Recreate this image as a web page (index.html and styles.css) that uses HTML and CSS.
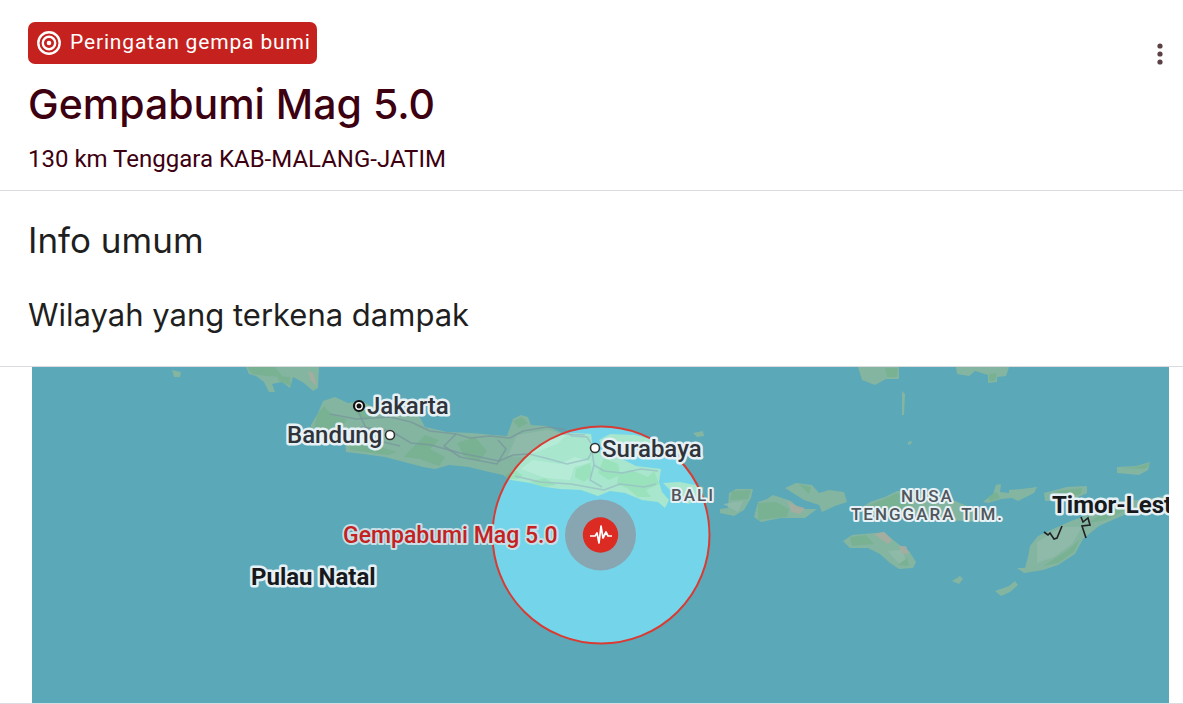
FILE: index.html
```html
<!DOCTYPE html>
<html lang="id">
<head>
<meta charset="utf-8">
<meta name="viewport" content="width=device-width, initial-scale=1">
<title>Peringatan gempa bumi</title>
<link rel="stylesheet" href="styles.css">
</head>
<body>
<main class="alert-card">
  <header class="alert-header">
    <div class="alert-summary">
      <div class="badge">
        <svg class="badge-icon" viewBox="0 0 24 24" aria-hidden="true">
          <circle cx="12" cy="12" r="10.7"/><circle cx="12" cy="12" r="6.2"/><circle class="badge-dot" cx="12" cy="12" r="2.3"/>
        </svg>
        <span>Peringatan gempa bumi</span>
      </div>
      <h1 class="title">Gempabumi Mag 5.0</h1>
      <p class="location">130 km Tenggara KAB-MALANG-JATIM</p>
    </div>
    <button class="menu-button" type="button" aria-label="Opsi lainnya">
      <svg class="menu-icon" viewBox="0 0 24 24" aria-hidden="true"><circle cx="12" cy="4" r="2.6"/><circle cx="12" cy="12" r="2.6"/><circle cx="12" cy="20" r="2.6"/></svg>
    </button>
  </header>
  <section class="info">
    <h2 class="section-title">Info umum</h2>
    <h3 class="section-subtitle">Wilayah yang terkena dampak</h3>
  </section>
  <section class="map-section">
    <svg class="map" viewBox="32 367 1137 336" role="img" aria-label="Peta wilayah yang terkena dampak">
      <rect class="sea" x="32" y="367" width="1137" height="336"/>
      <g class="land">
        <path d="M246 367H319L318 388L313 391L304 383L293 377L290 388L282 382L272 384L275 392L269 392L264 382L256 376L249 374Z"/>
        <path d="M172 370L181 372L180 377L174 377Z"/>
        <path d="M311 425L318 413L323 401L335 397L348 403L361 401L371 406L390 406L404 411L418 414L425 427L447 432L472 433L493 435L507 436L513 419L521 415L528 417L531 425L547 426L562 433L575 433L591 434L593 448L603 455L616 456L636 466L661 469L659 482L662 492L669 500L665 508L658 502L642 500L625 493L610 491L598 496L581 490L560 489L545 487L530 483L511 480L503 475L485 471L469 467L449 465L435 469L423 467L404 462L385 457L363 454L346 452L345 442L325 440L310 432Z"/>
        <path d="M599 440L610 434L635 435L655 440L652 449L625 447L603 450Z"/>
        <path d="M693 433L703 431L704 436L697 437Z"/>
        <path d="M663 483L680 482L704 487L701 499L688 504L676 496Z"/>
        <path d="M720 509L728 508L729 493L736 489L753 489L751 498L744 510L734 516L720 513Z"/>
        <path d="M754 517L758 502L767 499L773 495L791 501L800 509L817 509L805 518L781 518L761 522Z"/>
        <path d="M785 488L796 483L812 485L819 493L829 490L844 492L847 502L835 506L822 512L819 505L804 500Z"/>
        <path d="M861 508L870 502L885 497L897 491L911 491L929 497L955 501L972 508L988 511L1000 516L982 522L945 520L920 514L884 516Z"/>
        <path d="M843 541L852 535L875 533L884 532L892 539L901 546L909 551L916 562L913 568L899 569L890 563L880 554L868 548L850 548Z"/>
        <path d="M983 502L993 494L996 485L1001 484L1000 492L1009 493L1009 490L1022 489L1037 487L1034 493L1018 501L1012 498L1001 499L988 503Z"/>
        <path d="M1044 493L1067 487L1087 486L1087 493L1070 501L1045 501Z"/>
        <path d="M1025 568L1028 557L1030 546L1038 536L1051 530L1071 521L1088 515L1112 502L1148 499L1169 495V501L1149 510L1124 515L1099 526L1083 539L1075 554L1058 565L1043 570L1024 573L1017 568Z"/>
        <path d="M995 591L1009 586L1015 581L1018 585L1010 592L1001 596Z"/>
        <path d="M952 581L960 576L963 579L959 584Z"/>
        <path d="M1117 467L1136 466L1150 462L1148 470L1139 475L1117 473Z"/>
        <path d="M858 367H899V379L886 379L875 385L862 380Z"/>
        <path d="M956 367H1009L1006 376L997 377V382L988 383V375L975 371L969 376L957 374Z"/>
        <path d="M902 391L905 394L904 415L902 415ZM908 442L912 441L911 444L908 445Z"/>
      </g>
      <g class="forest">
        <path d="M247 367H275L283 377L266 376L252 374ZM277 376L290 377L291 386L279 381Z"/>
        <path d="M317 415L324 406L332 415L347 419L342 428L324 432L314 427ZM354 406L374 413L366 420L357 414ZM350 443L374 445L397 452L388 455L350 450ZM425 435L439 440L430 449L445 457L439 466L420 459L404 457L411 449ZM457 443L475 437L487 451L479 461L464 456ZM513 421L522 417L528 423L519 428Z"/>
        <path d="M506 475L515 470L523 476L518 479L507 479ZM576 469L590 463L592 475L584 482L575 477ZM604 458L618 464L620 475L609 480L598 473ZM619 473L631 470L648 477L654 471L659 484L646 490L651 497L638 497L627 488L617 484ZM530 482L545 478L556 485L543 487Z"/>
        <path d="M732 491L751 490L748 499L730 500ZM758 503L776 502L789 509L787 517L758 520ZM799 484L811 487L809 494ZM868 506L897 493L913 504L903 513L879 513ZM850 537L866 535L874 544L852 546ZM892 553L907 558L909 566L899 565Z"/>
        <path d="M1056 491L1082 488L1081 494L1064 498ZM1088 523L1108 508L1134 506L1106 520ZM1043 566L1068 550L1080 539L1074 552L1058 563ZM1118 468L1136 467L1150 463L1145 469ZM988 497L996 492L1000 498L990 501ZM989 374L997 373L995 381L989 381ZM885 368H898L897 377L887 377Z"/>
      </g>
      <g class="lowland">
        <path d="M517 435L547 430L567 435L557 444L523 457L508 456ZM533 460L560 464L575 457L592 462L574 467L570 480L545 478L521 469ZM1037 542L1062 527L1082 527L1072 544L1054 557L1037 563ZM888 551L901 550L906 559L899 564ZM723 504L743 501L738 512Z"/>
      </g>
      <path class="upland" d="M787 500L794 505L805 508L800 514L792 512ZM874 534L884 532L892 540L888 544ZM899 546L906 546L909 553L902 554ZM308 371L313 373L317 386L311 381Z"/>
      <g class="roads">
        <path d="M330 414L356 419L390 417L411 422L430 431L456 434L470 438L490 436L510 438L523 431L547 427L563 429L572 436L587 437L594 448L588 459L567 464L549 459L529 454L513 455L499 461L480 457L460 453L431 445L411 443L391 431L361 427"/>
        <path d="M356 407L365 426L379 441L400 446M456 434L444 446L460 457L497 464L506 449L498 440M515 476L540 482L571 484L604 490L620 484L644 487L656 484M592 450L594 465L604 471L622 473L641 469L658 471M594 465L590 480L602 487M561 434L585 435"/>
      </g>
      <path class="shade" fill-rule="evenodd" d="M32 367H1169V703H32ZM601 426.5A108.5 108.5 0 1 0 601 643.5A108.5 108.5 0 1 0 601 426.5Z"/>
      <circle class="impact" cx="601" cy="535" r="108.5"/>
      <circle class="halo" cx="600.5" cy="535" r="35.5"/>
      <circle class="marker" cx="600.5" cy="535" r="17.7"/>
      <path class="pulse" d="M590 536H595L597 533L599 543L601 526L603 538L606 532L608 536H612"/>
      <path class="border-line" d="M1044 532L1048 535L1050 533L1054 539L1057 538L1062 526M1081 517L1083 522L1088 518L1090 525L1082 526L1086 538"/>
      <circle class="capital" cx="359" cy="406" r="5"/><circle class="capital-dot" cx="359" cy="406" r="2.5"/>
      <circle class="city" cx="390" cy="435" r="4.5"/>
      <circle class="city" cx="595" cy="448" r="4.5"/>
      <text class="label" x="367" y="414">Jakarta</text>
      <text class="label" x="287" y="443">Bandung</text>
      <text class="label" x="602" y="457">Surabaya</text>
      <text class="label region" x="671" y="501">BALI</text>
      <text class="label region" x="901" y="502">NUSA</text>
      <text class="label region" x="851" y="520">TENGGARA TIM.</text>
      <text class="label quake" x="343" y="543">Gempabumi Mag 5.0</text>
      <text class="label country" x="251" y="585">Pulau Natal</text>
      <text class="label country" x="1052" y="513">Timor-Leste</text>
    </svg>
  </section>
</main>
</body>
</html>
```
FILE: styles.css
```css
* { box-sizing: border-box; }

body {
  margin: 0;
  background: #fff;
  color: #1f1f1f;
  font-family: Roboto, "Liberation Sans", sans-serif;
}

.alert-header {
  display: flex;
  align-items: flex-start;
  justify-content: space-between;
  padding: 22px 11px 15px 28px;
  border-bottom: 1px solid #dadce0;
  color: #3c0010;
}

.badge {
  display: inline-flex;
  align-items: center;
  gap: 9px;
  height: 42px;
  padding: 0 6px 2px 9px;
  border-radius: 7px;
  background: #c5221f;
  color: #fff;
  font-size: 21px;
  line-height: 28px;
  letter-spacing: 0.04em;
}

.badge-icon {
  width: 24px;
  height: 24px;
  margin-top: 2px;
  fill: none;
  stroke: #fff;
  stroke-width: 2.4;
}

.badge-dot { fill: #fff; stroke: none; }

.title {
  margin: 14px 0 0;
  font: 500 41px/52px Inter, sans-serif;
}

.location {
  margin: 13px 0 0;
  font-size: 24px;
  line-height: 32px;
}

.menu-button {
  display: grid;
  place-items: center;
  width: 24px;
  height: 48px;
  margin-top: 8px;
  padding: 0;
  border: 0;
  background: none;
}

.menu-icon { width: 24px; height: 24px; fill: #5b4046; }

.info {
  padding: 26px 28px 28px;
  border-bottom: 1px solid #dadce0;
}

.section-title {
  margin: 0;
  font: 400 35px/46px Inter, sans-serif;
}

.section-subtitle {
  margin: 29px 0 0;
  font: 400 31px/46px Inter, sans-serif;
}

.map-section {
  padding: 0 14px 0 32px;
  border-bottom: 1px solid #dadce0;
}

.map { display: block; width: 100%; height: auto; }

.sea { fill: #74d5ea; }
.land { fill: #a8e6cd; }
.forest { fill: #94dfb4; fill-opacity: .7; }
.lowland { fill: #b9edda; fill-opacity: .8; }
.upland { fill: #dcd8cc; fill-opacity: .8; }
.roads { fill: none; stroke: #98bdc5; stroke-width: 1.6; stroke-linejoin: round; stroke-opacity: .75; }
.shade { fill: #000; fill-opacity: .21; }
.impact { fill: none; stroke: #d93b32; stroke-width: 2; }
.halo { fill: #88a5b2; }
.marker { fill: #dc2b22; }
.pulse { fill: none; stroke: #fff; stroke-width: 1.7; stroke-linejoin: round; }
.border-line { fill: none; stroke: #202124; stroke-width: 1.6; }
.capital { fill: #fff; stroke: #111; stroke-width: 2.2; }
.capital-dot { fill: #111; }
.city { fill: #fff; stroke: #333; stroke-width: 1.6; }

.label {
  fill: #30343a;
  stroke: #e6f1f5;
  stroke-width: 5;
  stroke-linejoin: round;
  paint-order: stroke;
  font-size: 24px;
  font-weight: 500;
}

.region { fill: #50565b; stroke-width: 4; font-size: 17px; letter-spacing: 2px; }
.quake { fill: #c5221f; stroke: #c8dfe6; stroke-width: 4; font-size: 23px; }
.country { fill: #17191c; font-weight: 700; }
```
